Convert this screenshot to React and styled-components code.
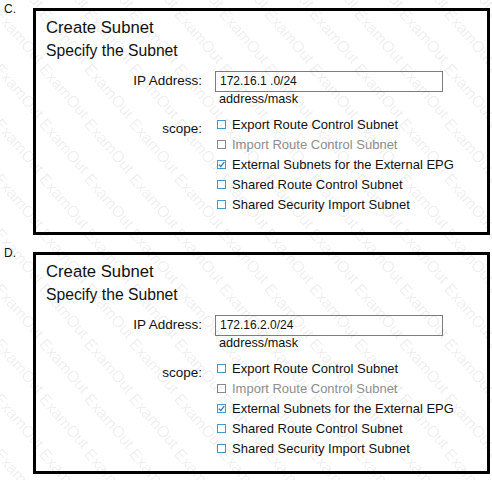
import styled, { createGlobalStyle } from "styled-components";

const GlobalStyle = createGlobalStyle`
    body {
        margin: 0;
        background: #fff;
        font-family: "Liberation Sans", Arial, sans-serif;
        color: #111;
    }
`;

const options = [
    { letter: "C.", ip: "172.16.1 .0/24", bottom: 18 },
    { letter: "D.", ip: "172.16.2.0/24", bottom: 13 },
];

const scopes = [
    { label: "Export Route Control Subnet" },
    { label: "Import Route Control Subnet", disabled: true },
    { label: "External Subnets for the External EPG", checked: true },
    { label: "Shared Route Control Subnet" },
    { label: "Shared Security Import Subnet" },
];

function CheckRow({ label, checked, disabled }) {
    return (
        <Row $disabled={disabled}>
            <Box $disabled={disabled}>
                {checked && (
                    <svg width="7" height="7" viewBox="0 0 7 7">
                        <path
                            d="M0.8 3.6 L2.8 5.5 L6.3 1.2"
                            fill="none"
                            stroke="#2c7fc4"
                            strokeWidth="1.3"
                        />
                    </svg>
                )}
            </Box>
            <span>{label}</span>
        </Row>
    );
}

function SubnetPanel({ ip, bottom }) {
    return (
        <Panel $bottom={bottom}>
            <Title>Create Subnet</Title>
            <Subtitle>Specify the Subnet</Subtitle>
            <Form>
                <Label>IP Address:</Label>
                <div>
                    <Field>{ip}</Field>
                    <Hint>address/mask</Hint>
                </div>
                <Label $top={5}>scope:</Label>
                <div>
                    {scopes.map((s) => (
                        <CheckRow key={s.label} {...s} />
                    ))}
                </div>
            </Form>
        </Panel>
    );
}

export default function App() {
    // watermark lattice, 45px across and 55px down
    const marks = [];
    for (let j = -2; j < 10; j++) {
        for (let i = -2; i < 12; i++) {
            marks.push(
                <Mark key={`${i}-${j}`} style={{ left: 3 + 45 * i, top: 6 + 55 * j }}>
                    ExamOut
                </Mark>
            );
        }
    }

    return (
        <Page>
            <GlobalStyle />
            {options.map((o) => (
                <Option key={o.letter}>
                    <Letter>{o.letter}</Letter>
                    <SubnetPanel ip={o.ip} bottom={o.bottom} />
                </Option>
            ))}
            <Watermark>{marks}</Watermark>
        </Page>
    );
}

const Page = styled.div`
    position: relative;
    width: 492px;
    height: 480px;
    overflow: hidden;
    padding: 2px 0 0 4px;
    box-sizing: border-box;
    display: flex;
    flex-direction: column;
    gap: 11px;
`;
const Option = styled.div`
    display: flex;
    align-items: flex-start;
`;
const Letter = styled.div`
    width: 29px;
    font-size: 12px;
    line-height: 14px;
`;
const Panel = styled.div`
    margin-top: 6px;
    width: 457px;
    box-sizing: border-box;
    border: 3px solid #000;
    padding: 7px 0 ${(p) => p.$bottom}px 10px;
`;
const Title = styled.div`
    font-size: 16.7px;
    line-height: 20px;
`;
const Subtitle = styled.div`
    margin-top: 3px;
    font-size: 15.7px;
    line-height: 20px;
`;
const Form = styled.div`
    margin-top: 10px;
    display: grid;
    grid-template-columns: 157px 228px;
    column-gap: 12px;
    row-gap: 8px;
`;
const Label = styled.div`
    text-align: right;
    font-size: 13.5px;
    line-height: 19px;
    padding-top: ${(p) => p.$top || 0}px;
    padding-right: 1px;
`;
const Field = styled.div`
    height: 21px;
    box-sizing: border-box;
    border: 1px solid #7d7d7d;
    padding-left: 4px;
    font-size: 12px;
    line-height: 19px;
`;
const Hint = styled.div`
    padding-left: 4px;
    font-size: 12.7px;
    line-height: 14px;
`;
const Row = styled.div`
    display: flex;
    align-items: center;
    gap: 6px;
    height: 20px;
    padding-left: 2px;
    white-space: nowrap;
    font-size: 13px;
    color: ${(p) => (p.$disabled ? "#8e8e8e" : "#111")};
`;
const Box = styled.span`
    flex: none;
    width: 9px;
    height: 9px;
    box-sizing: border-box;
    border: 1px solid ${(p) => (p.$disabled ? "#8a8a8a" : "#3f9ad6")};
    background: #fff;
    display: flex;
    align-items: center;
    justify-content: center;
    margin-top: 1px;
`;
const Watermark = styled.div`
    position: absolute;
    inset: 0;
    pointer-events: none;
`;
const Mark = styled.span`
    position: absolute;
    font-size: 16px;
    line-height: 16px;
    color: rgba(0, 0, 0, 0.08);
    transform: rotate(49deg);
    transform-origin: 0 0;
    white-space: nowrap;
`;
